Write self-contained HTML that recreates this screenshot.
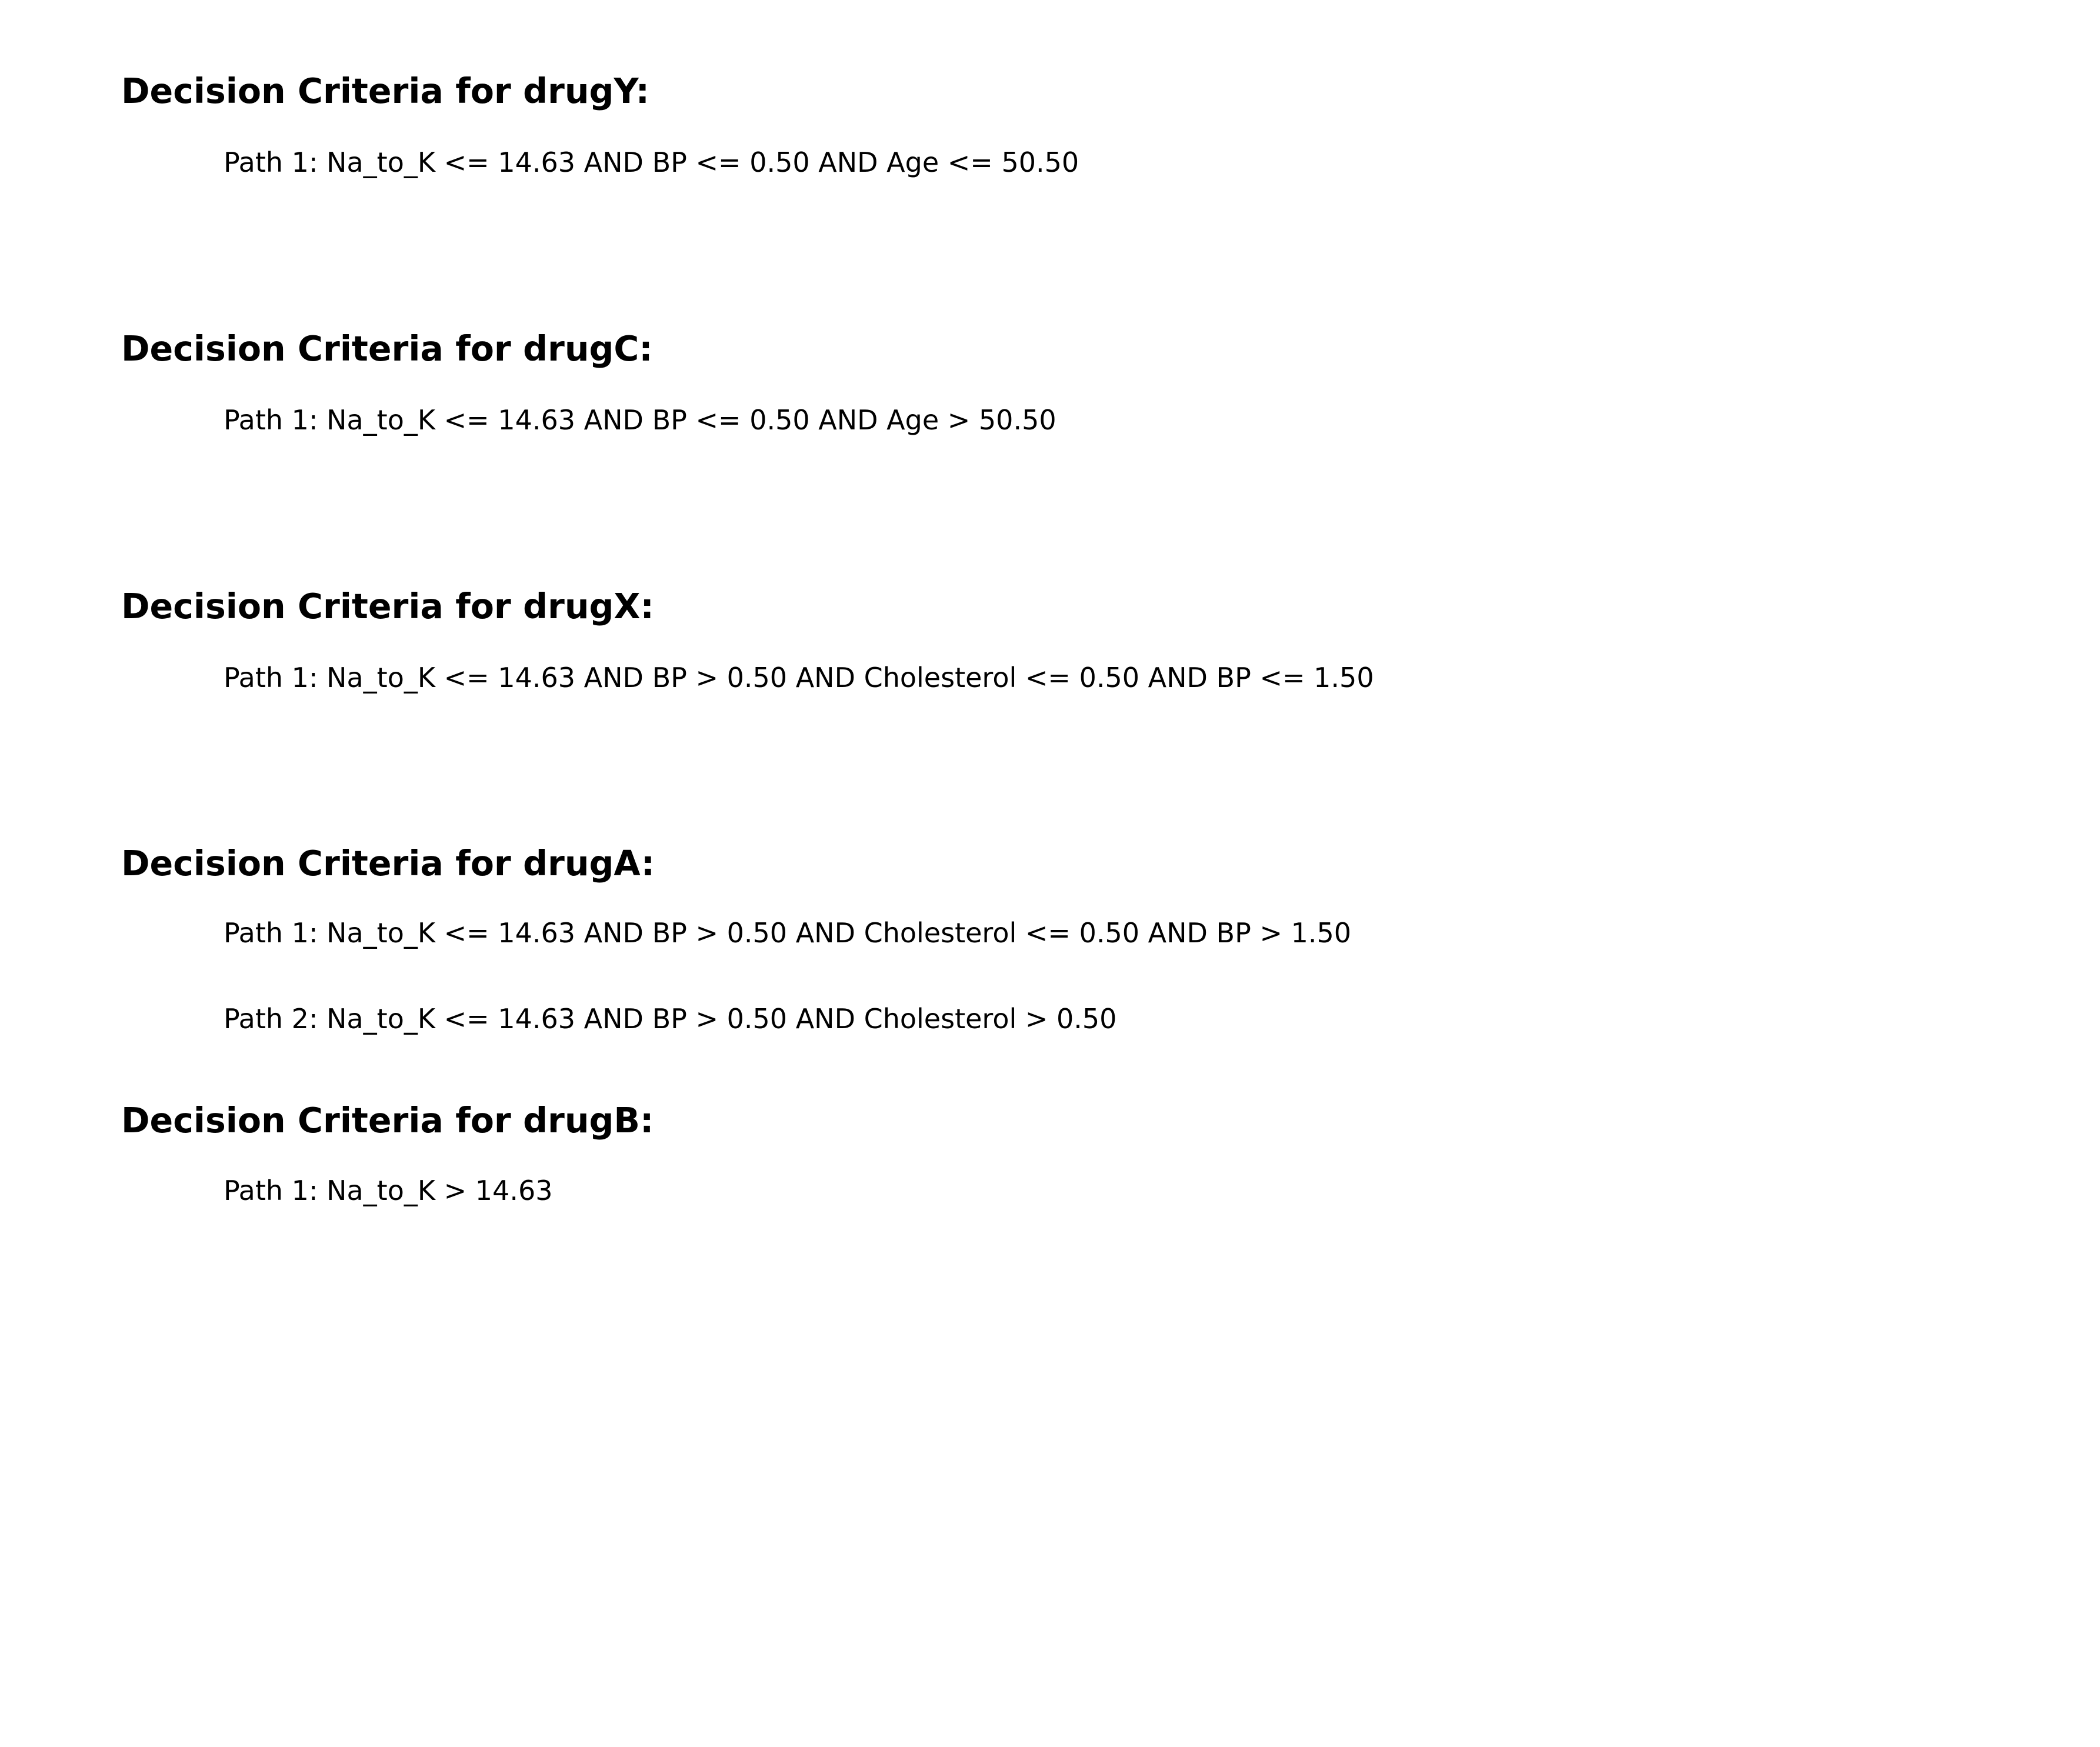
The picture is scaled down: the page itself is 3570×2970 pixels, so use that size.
<!DOCTYPE html>
<html><head><meta charset="utf-8"><style>
html,body{margin:0;padding:0;background:#fff;width:3570px;height:2970px;overflow:hidden}
svg{display:block}
.h{font-family:"DejaVu Sans","Liberation Sans",sans-serif;font-weight:bold;font-size:58.5px;fill:#000}
.p{font-family:"DejaVu Sans","Liberation Sans",sans-serif;font-size:46px;fill:#000}
</style></head><body>
<svg width="3570" height="2970" xmlns="http://www.w3.org/2000/svg">
<text class="h" x="206" y="175">Decision Criteria for drugY:</text>
<text class="p" x="380" y="292">Path 1: Na_to_K &lt;= 14.63 AND BP &lt;= 0.50 AND Age &lt;= 50.50</text>
<text class="h" x="206" y="613">Decision Criteria for drugC:</text>
<text class="p" x="380" y="730">Path 1: Na_to_K &lt;= 14.63 AND BP &lt;= 0.50 AND Age &gt; 50.50</text>
<text class="h" x="206" y="1051">Decision Criteria for drugX:</text>
<text class="p" x="380" y="1168">Path 1: Na_to_K &lt;= 14.63 AND BP &gt; 0.50 AND Cholesterol &lt;= 0.50 AND BP &lt;= 1.50</text>
<text class="h" x="206" y="1488">Decision Criteria for drugA:</text>
<text class="p" x="380" y="1602">Path 1: Na_to_K &lt;= 14.63 AND BP &gt; 0.50 AND Cholesterol &lt;= 0.50 AND BP &gt; 1.50</text>
<text class="p" x="380" y="1748">Path 2: Na_to_K &lt;= 14.63 AND BP &gt; 0.50 AND Cholesterol &gt; 0.50</text>
<text class="h" x="206" y="1925">Decision Criteria for drugB:</text>
<text class="p" x="380" y="2040">Path 1: Na_to_K &gt; 14.63</text>
</svg>
</body></html>
